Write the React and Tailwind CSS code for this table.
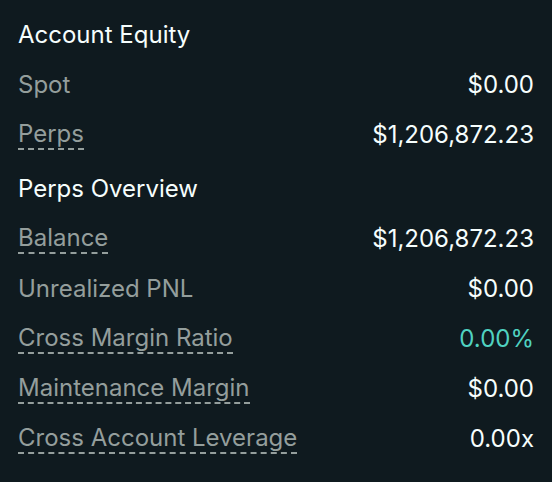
export default function App() {
  const Row = ({ label, value, dashed, valueClass = "text-[#f6fefd]" }) => (
    <div className="flex h-[50px] items-center justify-between">
      <span className={"text-[#949e9c] leading-[28px] " + (dashed ? "border-b-2 border-dashed border-[#949e9c]" : "")}>{label}</span>
      <span className={valueClass}>{value}</span>
    </div>
  );
  const Title = ({ children }) => (
    <div className="flex h-[50px] items-center text-[#f6fefd]">{children}</div>
  );
  return (
    <div className="w-[552px] h-[482px] bg-[#0f1a1f] pl-[18px] pr-[18px] pt-[10px] text-[24px]" style={{ fontFamily: "Inter, sans-serif" }}>
      <Title>Account Equity</Title>
      <Row label="Spot" value="$0.00" />
      <Row label="Perps" value="$1,206,872.23" dashed />
      <div className="h-[4px]" />
      <Title>Perps Overview</Title>
      <Row label="Balance" value="$1,206,872.23" dashed />
      <Row label="Unrealized PNL" value="$0.00" />
      <Row label="Cross Margin Ratio" value="0.00%" dashed valueClass="text-[#50d2c1]" />
      <Row label="Maintenance Margin" value="$0.00" dashed />
      <Row label="Cross Account Leverage" value="0.00x" dashed />
    </div>
  );
}
